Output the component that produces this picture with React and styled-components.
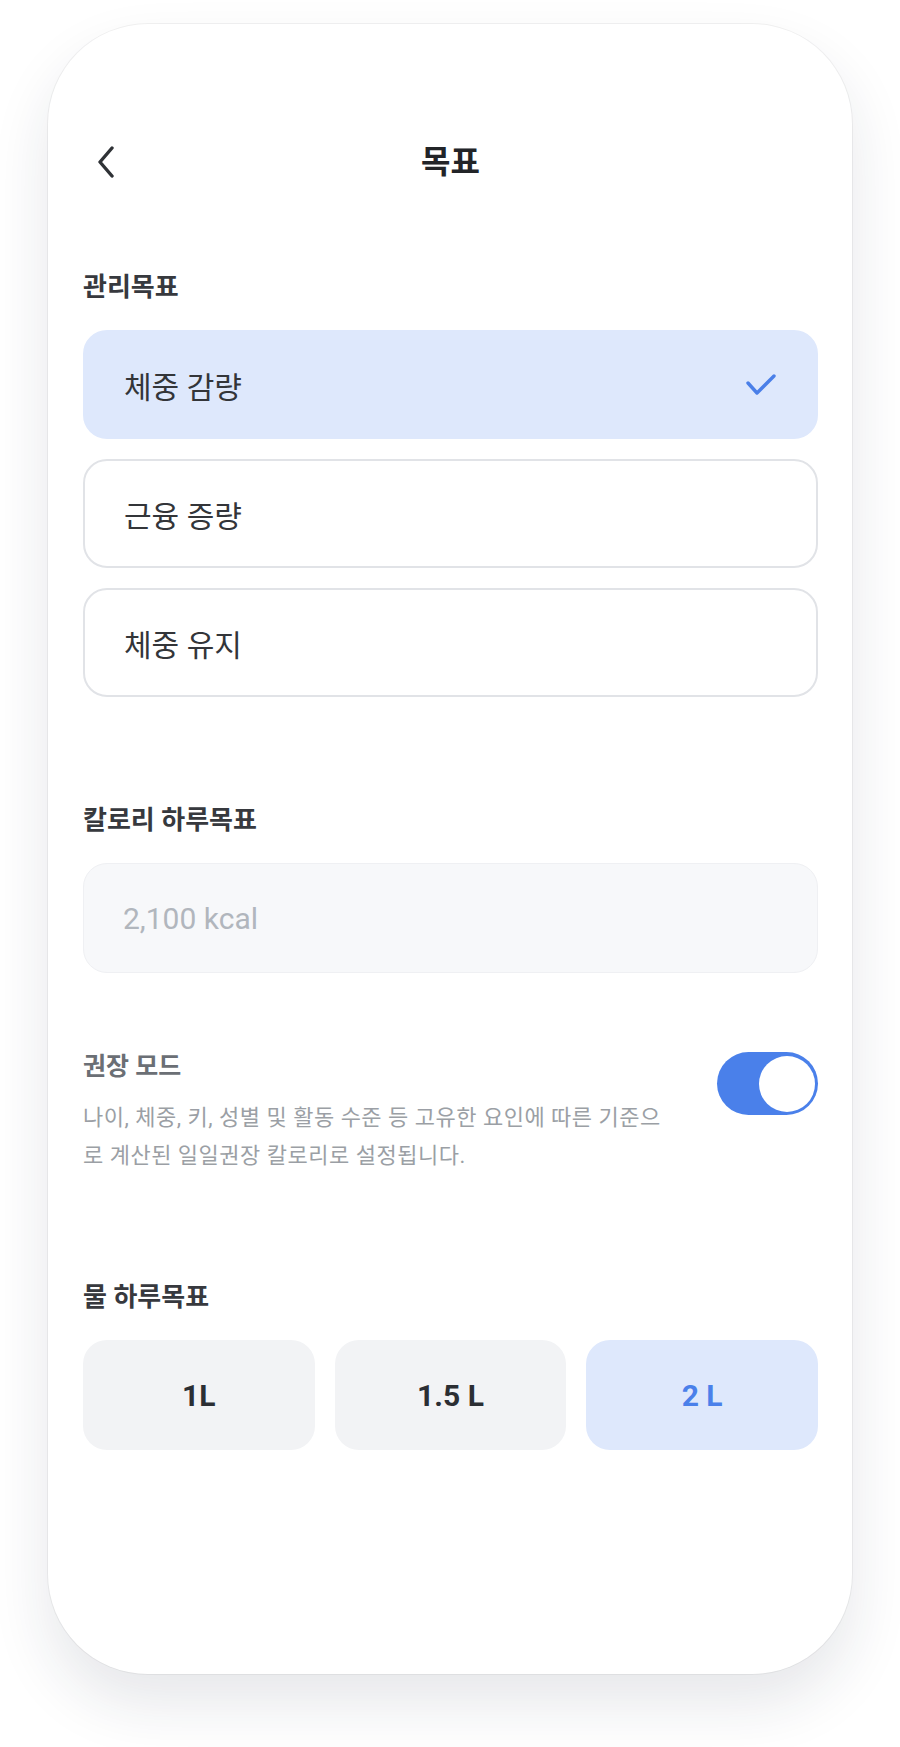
import React, { useState } from 'react'
import styled, { createGlobalStyle } from 'styled-components'

const GlobalStyle = createGlobalStyle`
  html, body {
    margin: 0;
    padding: 0;
    background: #ffffff;
  }
  body {
    font-family: Roboto, "Noto Sans CJK KR", "Noto Sans", sans-serif;
    color: #333;
  }
  * {
    box-sizing: border-box;
  }
`

const goals = ['체중 감량', '근융 증량', '체중 유지']
const waters = ['1L', '1.5 L', '2 L']

function App() {
  const [goal, setGoal] = useState(0)
  const [water, setWater] = useState(2)
  const [recommend, setRecommend] = useState(true)

  return (
    <Page>
      <GlobalStyle />
      <Phone>
        <Header>
          <BackButton aria-label="뒤로">
            <svg width="18" height="32" viewBox="0 0 18 32" fill="none">
              <polyline points="15,2 3,16 15,30" stroke="#2f3236" strokeWidth="3.4" strokeLinecap="round" strokeLinejoin="round" />
            </svg>
          </BackButton>
          <Title>목표</Title>
          <span />
        </Header>

        <Section $top={75}>
          <Label>관리목표</Label>
          <OptionList>
            {goals.map((g, i) => (
              <Option key={g} $active={goal === i} onClick={() => setGoal(i)}>
                {g}
                {goal === i && (
                  <svg width="30" height="22" viewBox="0 0 30 22" fill="none">
                    <polyline points="2,9 11,19 28,2" stroke="#4a7fe8" strokeWidth="3.4" strokeLinecap="round" strokeLinejoin="round" />
                  </svg>
                )}
              </Option>
            ))}
          </OptionList>
        </Section>

        <Section $top={105}>
          <Label>칼로리 하루목표</Label>
          <Input>2,100 kcal</Input>
        </Section>

        <RecommendRow>
          <RecommendText>
            <RecommendTitle>권장 모드</RecommendTitle>
            <Description>
              나이, 체중, 키, 성별 및 활동 수준 등 고유한 요인에 따른 기준으<br />
              로 계산된 일일권장 칼로리로 설정됩니다.
            </Description>
          </RecommendText>
          <Toggle $on={recommend} onClick={() => setRecommend(!recommend)}>
            <Knob $on={recommend} />
          </Toggle>
        </RecommendRow>

        <Section $top={104}>
          <Label>물 하루목표</Label>
          <WaterGrid>
            {waters.map((w, i) => (
              <WaterButton key={w} $active={water === i} onClick={() => setWater(i)}>
                {w}
              </WaterButton>
            ))}
          </WaterGrid>
        </Section>
      </Phone>
    </Page>
  )
}

export default App

const Page = styled.div`
  min-height: 1747px;
  padding-top: 24px;
`

const Phone = styled.div`
  width: 804px;
  height: 1650px;
  margin: 0 auto;
  padding: 106px 34px 0 35px;
  background: #fff;
  border-radius: 100px;
  box-shadow: 0 30px 60px rgba(30, 40, 60, 0.11), 0 0 0 1px rgba(0, 0, 0, 0.05);
  display: flex;
  flex-direction: column;
`

const Header = styled.div`
  height: 64px;
  display: grid;
  grid-template-columns: 1fr auto 1fr;
  align-items: center;
`

const BackButton = styled.button`
  justify-self: start;
  border: none;
  background: none;
  padding: 0 0 0 14px;
  display: flex;
  align-items: center;
  cursor: pointer;
`

const Title = styled.h1`
  margin: 0;
  font-size: 32px;
  font-weight: 700;
  color: #222428;
  line-height: 64px;
`

const Section = styled.div`
  margin-top: ${props => props.$top}px;
  display: flex;
  flex-direction: column;
  gap: 25px;
`

const Label = styled.div`
  font-size: 26px;
  font-weight: 700;
  color: #37393e;
  line-height: 36px;
`

const OptionList = styled.div`
  display: flex;
  flex-direction: column;
  gap: 20px;
`

const Option = styled.div`
  height: 109px;
  padding: 0 40px 0 39px;
  display: flex;
  align-items: center;
  justify-content: space-between;
  border-radius: 24px;
  font-size: 30px;
  color: #333539;
  cursor: pointer;
  background: ${props => props.$active ? '#dee8fc' : '#fff'};
  border: 2px solid ${props => props.$active ? '#dee8fc' : '#e1e3e7'};
`

const Input = styled.div`
  height: 110px;
  padding: 0 39px;
  display: flex;
  align-items: center;
  border-radius: 24px;
  background: #f7f8fa;
  border: 1.5px solid #eff0f3;
  font-size: 30px;
  color: #b1b6bd;
`

const RecommendRow = styled.div`
  margin-top: 77px;
  display: flex;
  justify-content: space-between;
  align-items: flex-start;
`

const RecommendText = styled.div`
  display: flex;
  flex-direction: column;
  gap: 15px;
`

const RecommendTitle = styled.div`
  font-size: 25px;
  font-weight: 700;
  color: #6b6f75;
  line-height: 34px;
`

const Description = styled.p`
  margin: 0;
  width: 610px;
  font-size: 22px;
  letter-spacing: 0.5px;
  line-height: 38px;
  color: #9b9fa5;
  white-space: nowrap;
`

const Toggle = styled.div`
  margin-top: 2px;
  width: 101px;
  height: 63px;
  border-radius: 32px;
  padding: 3.5px;
  background: ${props => props.$on ? '#4a80ea' : '#d5d8dd'};
  display: flex;
  justify-content: ${props => props.$on ? 'flex-end' : 'flex-start'};
  cursor: pointer;
  flex-shrink: 0;
`

const Knob = styled.div`
  width: 56px;
  height: 56px;
  border-radius: 50%;
  background: #fff;
`

const WaterGrid = styled.div`
  display: grid;
  grid-template-columns: repeat(3, 1fr);
  gap: 20px;
`

const WaterButton = styled.div`
  height: 110px;
  border-radius: 24px;
  display: flex;
  align-items: center;
  justify-content: center;
  font-size: 30px;
  font-weight: 700;
  cursor: pointer;
  background: ${props => props.$active ? '#dee8fc' : '#f2f3f5'};
  color: ${props => props.$active ? '#4a80ea' : '#2b2e33'};
`
